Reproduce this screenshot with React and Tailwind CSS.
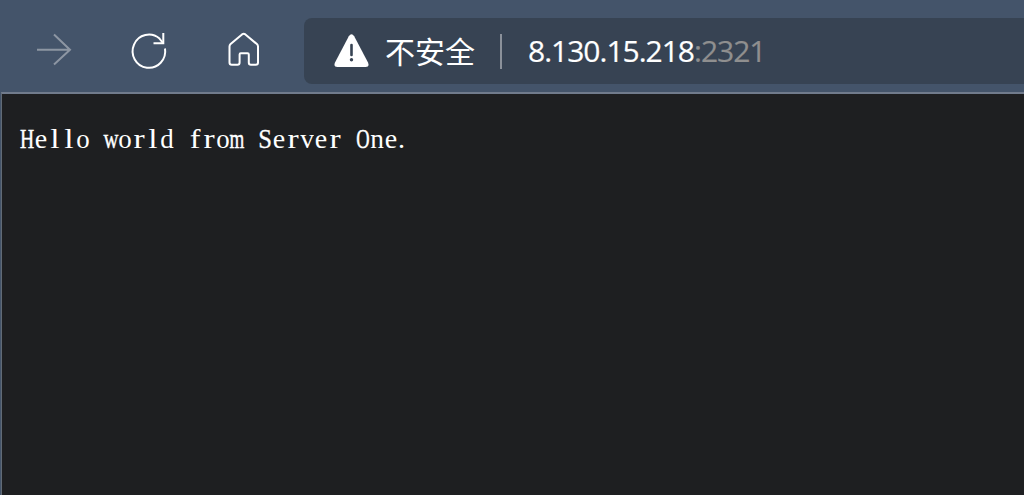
const glyphStyle = {
  H: 'scale-x-[0.7] [-webkit-text-stroke:0.5px_white]',
  w: 'scale-x-[0.74] [-webkit-text-stroke:0.4px_white]',
  m: 'scale-x-[0.68] [-webkit-text-stroke:0.5px_white]',
  O: 'scale-x-[0.66] [-webkit-text-stroke:0.5px_white]',
  S: 'scale-x-[0.88] [-webkit-text-stroke:0.3px_white]',
  o: 'scale-x-[0.96]',
  d: 'scale-x-[0.96]',
  n: 'scale-x-[0.98]',
  v: 'scale-x-[0.98]',
  r: 'scale-x-[1.2]',
  l: 'scale-x-[1.2]',
  f: 'scale-x-[1.15]',
};

function MonoSerif({ text }) {
  return (
    <p className="flex whitespace-pre font-['Liberation_Serif',serif] text-[28px] leading-8 text-white">
      {text.split('').map((ch, i) => (
        <span key={i} className={`flex w-[14px] shrink-0 ${ch === '.' ? 'justify-start' : 'justify-center'} ${glyphStyle[ch] || ''}`}>
          {ch}
        </span>
      ))}
    </p>
  );
}

function Toolbar() {
  return (
    <header className="flex h-[92px] shrink-0 items-start bg-[#44546a]">
      <div className="flex w-[304px] shrink-0 pt-[28px] pl-[32px]">
        <svg className="mr-[50px] h-11 w-11" viewBox="0 0 44 44" fill="none" stroke="#8d96a3" strokeWidth="2">
          <path d="M5 21.8H38M22 6.5L38 21.8L22 36.5" />
        </svg>
        <svg className="mr-[50px] h-11 w-11" viewBox="0 0 44 44" fill="none" stroke="#fff" strokeWidth="2">
          <path d="M39 20.5A16.3 16.6 0 1 1 33.5 10.6L37 15" />
          <path d="M37.3 5V15.2H27.5" />
        </svg>
        <svg className="h-11 w-11" viewBox="0 0 44 44" fill="none" stroke="#fff" strokeWidth="2" strokeLinejoin="round">
          <path d="M9.5 18.5Q9.5 17.1 10.6 16.1L22 6.4Q23.7 5.2 25.4 6.4L36.9 16.1Q38 17.1 38 18.5V34.5Q38 36.8 35.7 36.8H31Q28.8 36.8 28.8 34.6V26.5Q28.8 25.3 27.6 25.3H20.8Q19.6 25.3 19.6 26.5V34.6Q19.6 36.8 17.4 36.8H11.8Q9.5 36.8 9.5 34.5Z" />
        </svg>
      </div>
      <div className="mt-[18px] flex h-[66px] flex-1 items-center rounded-l-[8px] bg-[#374353] pl-[30px]">
        <svg className="mr-[16px] h-[34px] w-[35px] shrink-0" viewBox="0 0 35 34">
          <path d="M14.8 2.2Q17.5 -1.5 20.2 2.2L34 28.5Q35.8 33 31.5 33H3.5Q-.8 33 1 28.5Z" fill="#fff" />
          <path d="M17.5 11V21" stroke="#374353" strokeWidth="2.6" strokeLinecap="round" />
          <circle cx="17.5" cy="25.8" r="1.7" fill="#374353" />
        </svg>
        <span className="w-[91px] shrink-0 whitespace-nowrap pb-[3px] font-['Noto_Sans_CJK_SC',sans-serif] text-[30px] leading-[44px] text-white">不安全</span>
        <span className="mr-[26px] ml-[24px] h-[35px] w-[2px] shrink-0 bg-[#8b919a]" />
        <span className="whitespace-nowrap pb-px font-['Open_Sans',sans-serif] text-[30px] leading-[44px] tracking-[-1px] text-white [-webkit-text-stroke:0.2px]">
          8.130.15.218<span className="text-[#8f8f8f]">:2321</span>
        </span>
      </div>
    </header>
  );
}

export default function App() {
  return (
    <div className="flex h-[495px] w-[1024px] flex-col overflow-hidden bg-[#44546a]">
      <Toolbar />
      <main className="ml-px flex-1 border-t-2 border-l border-t-[#717b8c] border-l-[#626b76] bg-[#1e1f21] pt-[29px] pl-[18px]">
        <MonoSerif text="Hello world from Server One." />
      </main>
    </div>
  );
}
